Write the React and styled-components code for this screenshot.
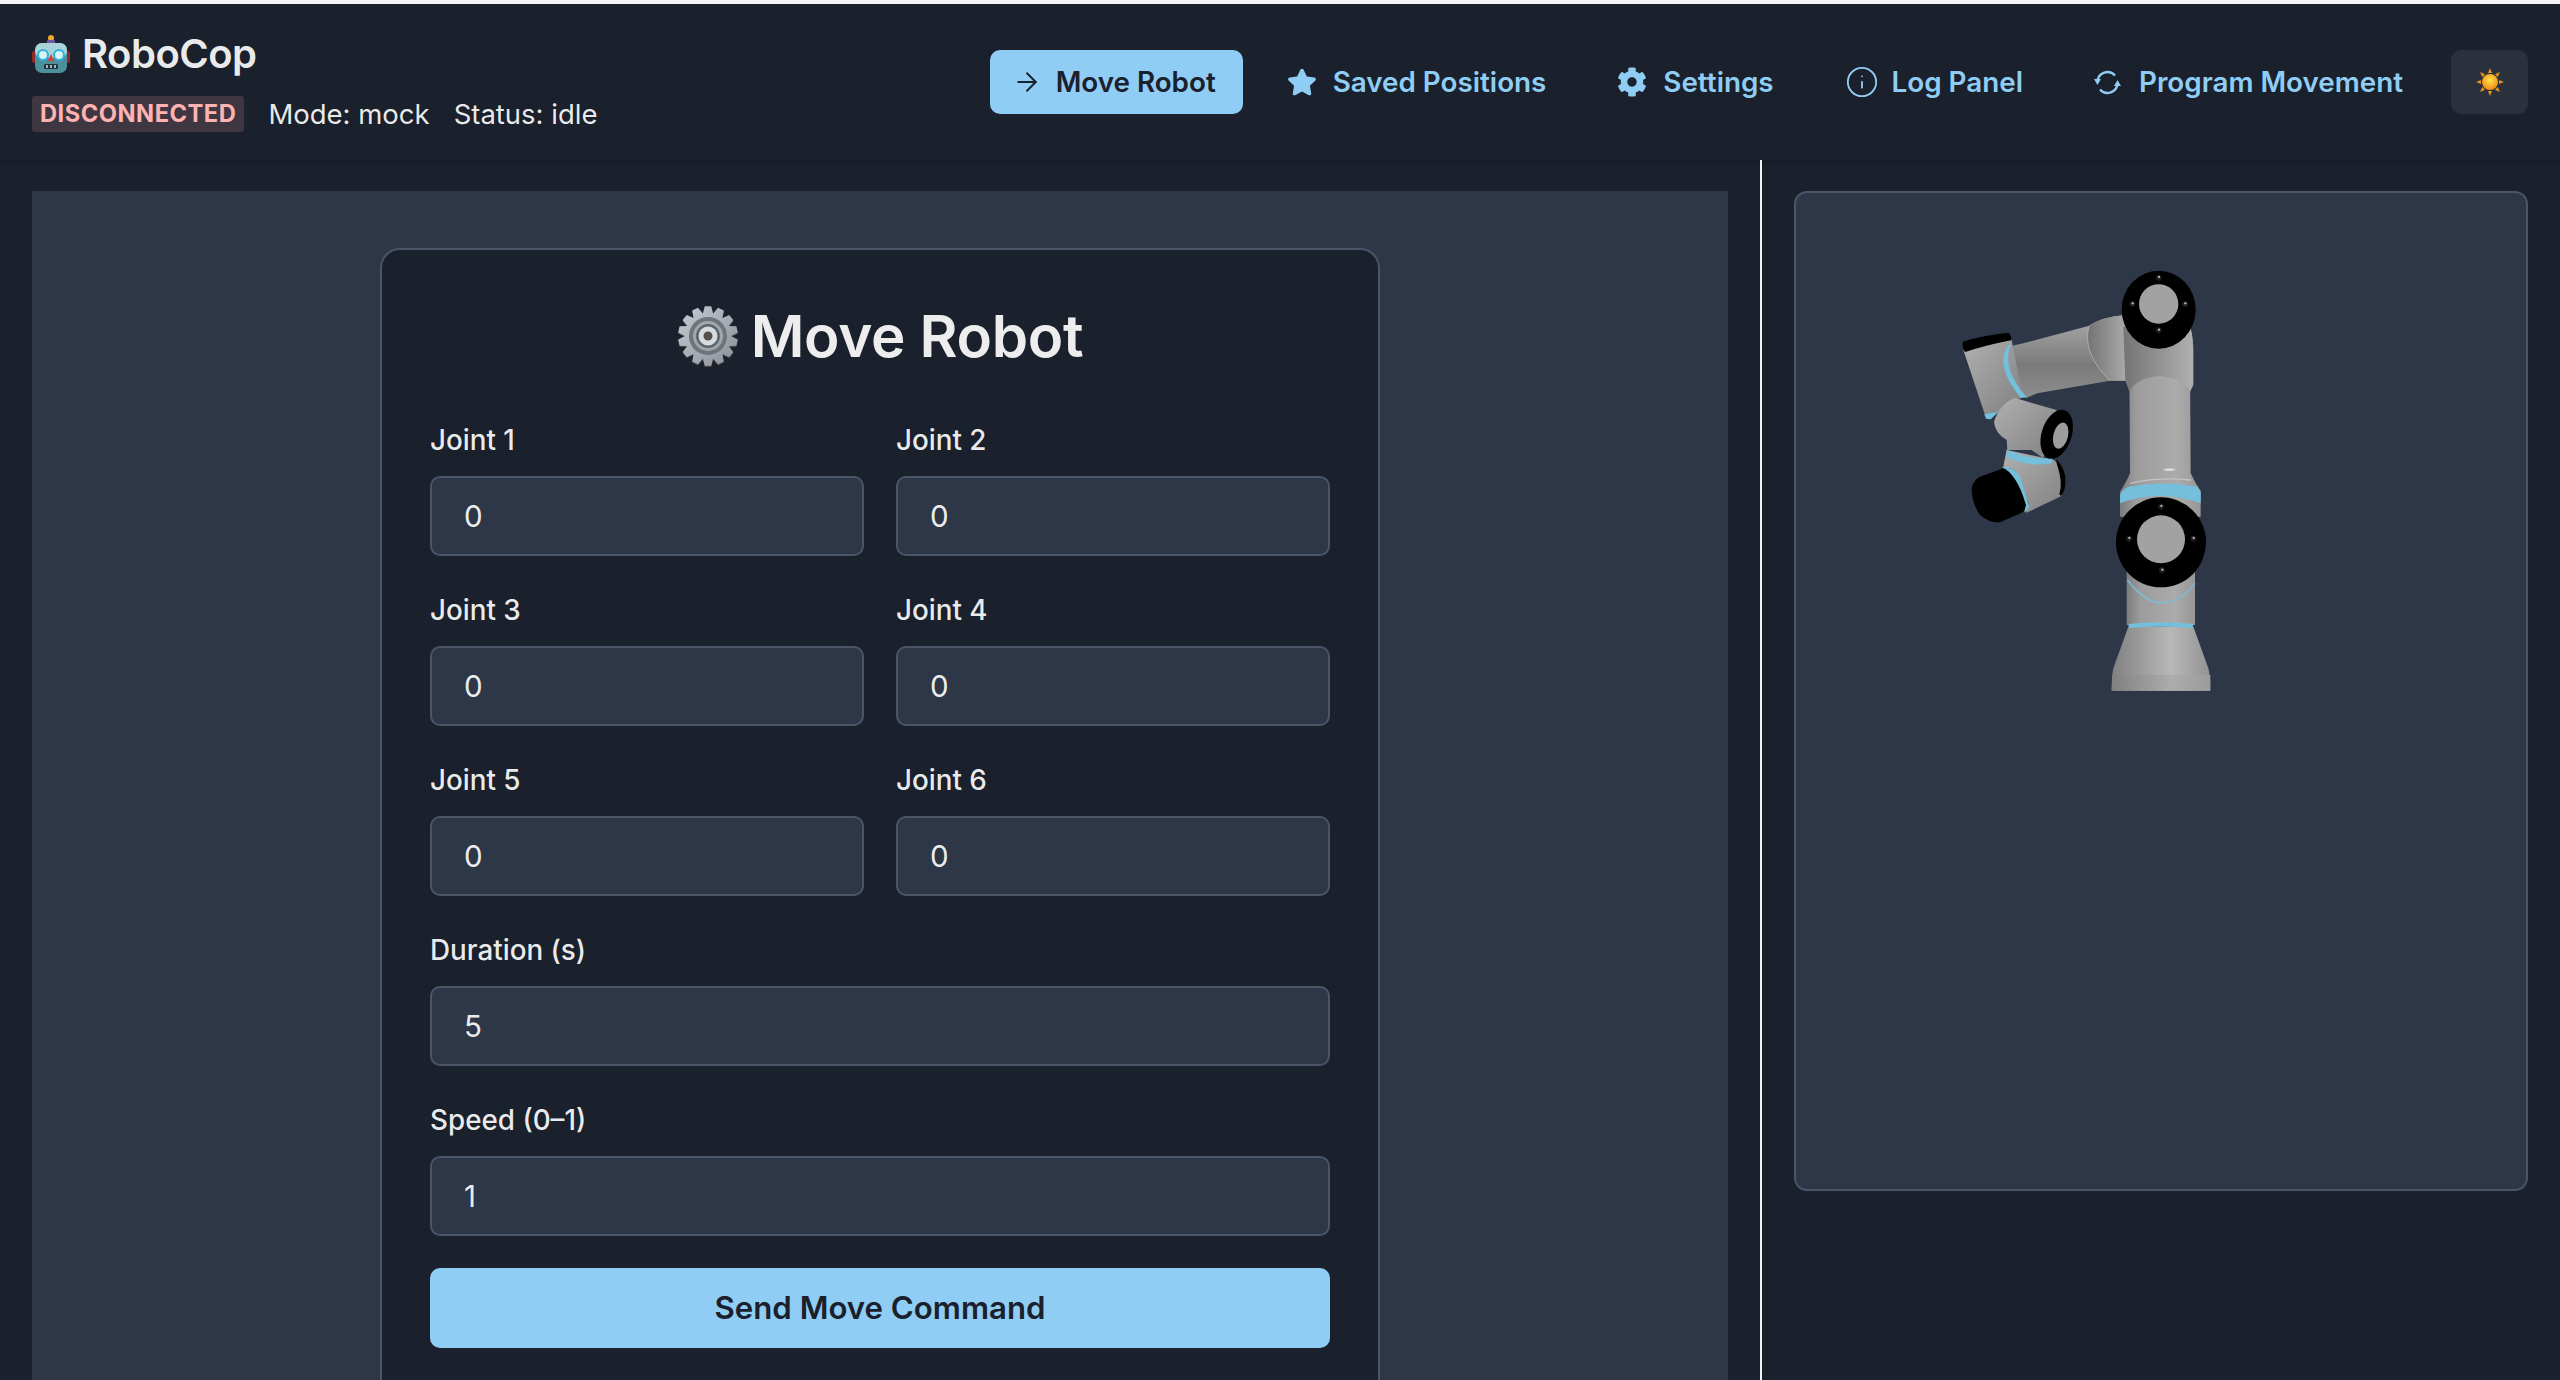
import React from 'react';
import styled, { createGlobalStyle } from 'styled-components';
import { ArrowRight, Info } from 'lucide-react';
import { FaCog, FaStar } from 'react-icons/fa';

const Global = createGlobalStyle`
  html, body {
    margin: 0;
    height: 100%;
    overflow: hidden;
    background: #1a202c;
    font-family: Inter, "Liberation Sans", sans-serif;
    color: rgba(255, 255, 255, 0.92);
  }
  * { box-sizing: border-box; }
`;

const Page = styled.div`
  height: 1380px;
  border-top: 4px solid #f4f4f6;
  display: flex;
  flex-direction: column;
  overflow: hidden;
`;
const Header = styled.header`
  height: 156px;
  flex: none;
  display: flex;
  align-items: flex-start;
  justify-content: space-between;
  padding: 26px 32px 0;
  box-shadow: 0 2px 6px rgba(0, 0, 0, 0.12);
`;
const Brand = styled.div`
  display: flex;
  flex-direction: column;
  gap: 18px;
`;
const Logo = styled.div`
  display: flex;
  align-items: center;
  gap: 12px;
  font-size: 40px;
  line-height: 48px;
  font-weight: 600;
  letter-spacing: -0.5px;
`;
const StatusRow = styled.div`
  display: flex;
  align-items: center;
  gap: 24px;
  font-size: 27.5px;
  line-height: 36px;
`;
const Badge = styled.span`
  background: rgba(254, 178, 178, 0.16);
  color: #feb2b2;
  font-size: 23.7px;
  font-weight: 700;
  line-height: 36px;
  padding: 0 8px;
  border-radius: 3px;
  letter-spacing: 0.5px;
`;
const Nav = styled.nav`
  display: flex;
  align-items: center;
  gap: 17px;
  margin-top: 20px;
`;
const NavButton = styled.button`
  height: 64px;
  display: flex;
  align-items: center;
  gap: ${p => p.$gap || 16}px;
  padding: 0 27px 0 ${p => (p.$active ? 22 : 27)}px;
  border: 0;
  border-radius: 10px;
  font: 600 27.8px Inter, sans-serif;
  background: ${p => (p.$active ? '#90cdf4' : 'transparent')};
  color: ${p => (p.$active ? '#1a202c' : '#90cdf4')};
`;
const ThemeButton = styled.button`
  width: 77px;
  height: 64px;
  display: flex;
  align-items: center;
  justify-content: center;
  margin-left: 4px;
  border: 0;
  border-radius: 10px;
  background: rgba(255, 255, 255, 0.08);
`;
const Main = styled.main`
  flex: 1;
  min-height: 0;
  display: grid;
  grid-template-columns: 1760px 2px 1fr;
`;
const LeftCol = styled.section`
  padding: 31px 32px 0;
`;
const Divider = styled.div`
  background: #f2f2f2;
`;
const RightCol = styled.section`
  padding: 31px 32px 0 32px;
`;
const Stage = styled.div`
  height: 1000px;
  padding-top: 57px;
  padding-left: 104px;
  background: #2d3748;
  border: 2px solid #4a5568;
  border-radius: 13px;
`;
const FormPanel = styled.div`
  height: 1300px;
  background: #2d3748;
  padding-top: 57px;
  display: flex;
  justify-content: center;
`;
const Card = styled.div`
  width: 1000px;
  height: 1300px;
  padding: 48px;
  background: #1a202c;
  border: 2px solid #4a5568;
  border-radius: 20px;
`;
const Title = styled.h2`
  margin: 6px 0 52px;
  display: flex;
  align-items: center;
  justify-content: center;
  gap: 12px;
  font-size: 58.3px;
  line-height: 64px;
  font-weight: 600;
  letter-spacing: -0.3px;
`;
const Fields = styled.div`
  display: grid;
  grid-template-columns: 1fr 1fr;
  column-gap: 32px;
  row-gap: 34px;
`;
const Field = styled.label`
  display: block;
  grid-column: ${p => (p.$wide ? '1 / -1' : 'auto')};
`;
const FieldLabel = styled.span`
  display: block;
  height: 40px;
  margin-bottom: 16px;
  font-size: 27.8px;
  line-height: 40px;
  font-weight: 500;
`;
const Input = styled.input`
  display: block;
  width: 100%;
  height: 80px;
  padding: 0 32px;
  border: 2px solid #4a5568;
  border-radius: 10px;
  background: #2d3748;
  color: rgba(255, 255, 255, 0.92);
  font: 400 29.5px Inter, sans-serif;
  outline: none;
`;
const Submit = styled.button`
  display: block;
  width: 100%;
  height: 80px;
  margin-top: 32px;
  border: 0;
  border-radius: 10px;
  background: #90cdf4;
  color: #1a202c;
  font: 600 31.2px Inter, sans-serif;
`;

function RobotEmoji() {
  return (
    <svg width="38" height="38" viewBox="0 0 38 38">
      <rect x="0" y="16" width="5" height="12" rx="2" fill="#8c2a2a" />
      <rect x="33" y="16" width="5" height="12" rx="2" fill="#8c2a2a" />
      <circle cx="19" cy="3" r="3" fill="#f0a92c" />
      <rect x="15" y="5" width="8" height="4" rx="1" fill="#6b5aa8" />
      <rect x="3" y="8" width="32" height="30" rx="7" fill="#4d8f9b" />
      <rect x="3" y="8" width="32" height="15" rx="7" fill="#a9d3d8" />
      <circle cx="11" cy="20" r="5" fill="#d9f3f7" stroke="#27b5dd" strokeWidth="2" />
      <circle cx="27" cy="20" r="5" fill="#d9f3f7" stroke="#27b5dd" strokeWidth="2" />
      <path d="M19 19l3.5 7h-7z" fill="#d8423c" />
      <rect x="12" y="29" width="14" height="5" rx="1.5" fill="#17353d" />
      <path d="M15 30v3M19 30v3M23 30v3" stroke="#d6dfe0" strokeWidth="1.5" />
    </svg>
  );
}

function SunEmoji() {
  const rays = [0, 45, 90, 135, 180, 225, 270, 315];
  return (
    <svg width="28" height="28" viewBox="0 0 28 28">
      <defs>
        <radialGradient id="sunFill" cx="50%" cy="40%" r="60%">
          <stop offset="0" stopColor="#ffe34d" />
          <stop offset="1" stopColor="#f08a14" />
        </radialGradient>
      </defs>
      {rays.map(r => (
        <path key={r} d="M14 0l2 5h-4z" fill="#e8921a" transform={`rotate(${r} 14 14)`} />
      ))}
      <circle cx="14" cy="14" r="8" fill="url(#sunFill)" />
    </svg>
  );
}

// 14 toothed gear, built from a polar outline
function gearOutline(cx, cy, outer, inner, teeth) {
  const pts = [];
  const step = (Math.PI * 2) / teeth;
  for (let i = 0; i < teeth; i++) {
    const a = i * step - Math.PI / 2;
    [[-0.5, inner], [-0.24, outer], [0.24, outer], [0.5, inner]].forEach(([o, r]) => {
      const t = a + o * step;
      pts.push(`${(cx + Math.cos(t) * r).toFixed(2)},${(cy + Math.sin(t) * r).toFixed(2)}`);
    });
  }
  return pts.join(' ');
}

function GearEmoji() {
  return (
    <svg width="62" height="62" viewBox="0 0 62 62">
      <defs>
        <linearGradient id="gearBody" x1="0" y1="0" x2="1" y2="1">
          <stop offset="0" stopColor="#c4ccd4" />
          <stop offset="1" stopColor="#8a8f96" />
        </linearGradient>
      </defs>
      <polygon points={gearOutline(31, 31, 30, 23, 14)} fill="#5b534e" transform="translate(0 1)" />
      <polygon points={gearOutline(31, 31, 30, 23, 14)} fill="url(#gearBody)" />
      <circle cx="31" cy="31" r="19" fill="#6f747b" />
      <circle cx="31" cy="31" r="15" fill="#a2a7ad" />
      <circle cx="31" cy="31" r="12" fill="#5f646b" />
      <circle cx="31" cy="31" r="9.5" fill="#d5dbe1" />
      <circle cx="31" cy="31" r="4.5" fill="#55504f" />
    </svg>
  );
}

function RepeatGlyph() {
  return (
    <svg width="27" height="27" viewBox="0 0 27 27" fill="none">
      <path d="M3.5 12.5A10 10 0 0 1 21 6.5" stroke="#90cdf4" strokeWidth="2.4" />
      <path d="M23.5 14.5A10 10 0 0 1 6 20.5" stroke="#90cdf4" strokeWidth="2.4" />
      <path d="M0 10h7l-3.5 6z" fill="#90cdf4" />
      <path d="M27 17h-7l3.5-6z" fill="#90cdf4" />
    </svg>
  );
}

function Screw({ x, y }) {
  return (
    <g>
      <circle cx={x} cy={y} r="9" fill="#1c1c1c" />
      <circle cx={x + 1} cy={y - 2} r="3.5" fill="#b0b0b0" />
    </g>
  );
}

function RobotArm() {
  return (
    <svg width="340" height="460" viewBox="0 0 1020 1380">
      <defs>
        <linearGradient id="col" x1="0" x2="1" y1="0" y2="0">
          <stop offset="0" stopColor="#7c7c7c" />
          <stop offset="0.2" stopColor="#9c9c9c" />
          <stop offset="0.7" stopColor="#ababab" />
          <stop offset="1" stopColor="#979797" />
        </linearGradient>
        <linearGradient id="baseFill" x1="0" x2="1" y1="0" y2="0">
          <stop offset="0" stopColor="#808080" />
          <stop offset="0.6" stopColor="#b8b8b8" />
          <stop offset="1" stopColor="#929292" />
        </linearGradient>
        <linearGradient id="baseFoot" x1="0" x2="1" y1="0" y2="0">
          <stop offset="0" stopColor="#808080" />
          <stop offset="0.6" stopColor="#acacac" />
          <stop offset="1" stopColor="#9c9c9c" />
        </linearGradient>
        <linearGradient id="fore" x1="0" x2="0" y1="0" y2="1">
          <stop offset="0" stopColor="#ababab" />
          <stop offset="0.6" stopColor="#7a7a7a" />
          <stop offset="1" stopColor="#8d8d8d" />
        </linearGradient>
        <linearGradient id="elbow" x1="0" x2="1" y1="0" y2="0">
          <stop offset="0" stopColor="#747474" />
          <stop offset="0.55" stopColor="#949494" />
          <stop offset="1" stopColor="#b0b0b0" />
        </linearGradient>
        <linearGradient id="wrist" x1="0" x2="1" y1="0" y2="1">
          <stop offset="0" stopColor="#b0b0b0" />
          <stop offset="1" stopColor="#808080" />
        </linearGradient>
      </defs>

      {/* base */}
      <path d="M685 1130L880 1130L925 1255Q931 1275 931 1322L635 1322Q635 1275 640 1255Z" fill="url(#baseFill)" />
      <path d="M637 1275L931 1275L931 1322L635 1322Z" fill="url(#baseFoot)" />
      <path d="M680 960L885 960L885 1125L680 1125Z" fill="url(#col)" />
      <path d="M682 990Q740 1062 785 1058Q840 1058 885 1000" fill="none" stroke="#78bfdc" strokeWidth="4" />
      <path d="M685 1122Q780 1112 880 1122L878 1134Q780 1126 687 1134Z" fill="#74c0dc" />

      {/* upper column */}
      <path d="M688 330L870 330L872 670Q885 700 902 722L902 800L660 800L660 725Q680 695 690 670Z" fill="url(#col)" />
      <path d="M660 735Q670 710 700 708Q790 692 890 710L902 725L902 760Q780 715 660 760Z" fill="#74c0dc" />
      <ellipse cx="808" cy="659" rx="18" ry="4" fill="#dcdcdc" />
      <path d="M690 700Q780 680 872 690" fill="none" stroke="#c4c4c4" strokeWidth="4" />

      {/* lower joint */}
      <circle cx="783" cy="877" r="135" fill="#000" />
      <circle cx="783" cy="868" r="72" fill="#a2a2a2" />
      <Screw x={783} y={770} />
      <Screw x={687} y={866} />
      <Screw x={880} y={866} />
      <Screw x={786} y={961} />

      {/* forearm */}
      <path d="M670 196Q610 200 565 228L370 280L325 290L330 400L378 444L412 430L630 392L690 392L690 200Z" fill="url(#fore)" />
      <path d="M567 228Q545 310 630 392L690 392L690 200L670 196Q610 200 567 228Z" fill="url(#elbow)" />
      <path d="M567 228Q545 310 630 392" fill="none" stroke="#c0c0c0" strokeWidth="2" />

      {/* elbow housing under the top joint */}
      <path d="M670 230L870 230Q882 260 880 330L880 405L870 425Q850 385 780 378Q710 382 688 425L676 392Z" fill="url(#elbow)" />

      {/* top joint */}
      <ellipse cx="776" cy="179" rx="111" ry="117" fill="#000" />
      <circle cx="776" cy="162" r="59" fill="#a2a2a2" />
      <Screw x={776} y={83} />
      <Screw x={697} y={162} />
      <Screw x={855} y={162} />
      <Screw x={776} y={241} />

      {/* wrist 1 */}
      <path d="M190 300L335 270L368 440L300 485L255 495Z" fill="url(#wrist)" />
      <path d="M188 275Q250 255 325 248Q335 255 334 270Q260 285 195 306Q187 295 188 275Z" fill="#000" />
      <path d="M334 283Q300 350 380 442L362 444Q285 350 322 288Z" fill="#74c0dc" />
      <path d="M253 493L296 485L272 508L258 506Z" fill="#74c0dc" />

      {/* wrist 3 and tool flange */}
      <path d="M320 600L462 630L482 650L497 695L485 738L380 788L320 720L310 650Z" fill="url(#wrist)" />
      <path d="M470 628Q498 660 497 695Q495 725 483 738L478 732Q490 700 470 640Z" fill="#000" />
      <path d="M320 600Q390 630 458 625L455 640Q380 652 320 620Z" fill="#74c0dc" />
      <path d="M215 715Q220 690 240 680L310 655Q335 650 350 668L385 760Q388 775 365 788L300 817Q270 820 240 795Q215 760 215 715Z" fill="#000" />
      <path d="M305 651Q345 650 360 680L388 770L372 788L378 765Q350 670 305 651Z" fill="#74c0dc" />

      {/* wrist 2 */}
      <path d="M345 444L470 480L430 625L395 600L322 600L320 570Q285 550 282 515Q300 460 345 444Z" fill="url(#wrist)" />
      <ellipse cx="470" cy="553" rx="45" ry="76" transform="rotate(18 470 553)" fill="#000" />
      <ellipse cx="482" cy="557" rx="22" ry="40" transform="rotate(14 482 557)" fill="#9c9c9c" />
    </svg>
  );
}

const jointRows = ['Joint 1', 'Joint 2', 'Joint 3', 'Joint 4', 'Joint 5', 'Joint 6'];

function App() {
  return (
    <Page>
      <Global />
      <Header>
        <Brand>
          <Logo><RobotEmoji />RoboCop</Logo>
          <StatusRow>
            <Badge>DISCONNECTED</Badge>
            <span>Mode: mock</span>
            <span>Status: idle</span>
          </StatusRow>
        </Brand>
        <Nav>
          <NavButton $active $gap={14}><ArrowRight size={30} strokeWidth={1.5} />Move Robot</NavButton>
          <NavButton><FaStar size={30} />Saved Positions</NavButton>
          <NavButton><FaCog size={30} />Settings</NavButton>
          <NavButton $gap={13}><Info size={34} strokeWidth={1.3} />Log Panel</NavButton>
          <NavButton $gap={18}><RepeatGlyph />Program Movement</NavButton>
          <ThemeButton><SunEmoji /></ThemeButton>
        </Nav>
      </Header>
      <Main>
        <LeftCol>
          <FormPanel>
            <Card>
              <Title><GearEmoji />Move Robot</Title>
              <Fields>
                {jointRows.map(name => (
                  <Field key={name}>
                    <FieldLabel>{name}</FieldLabel>
                    <Input defaultValue="0" />
                  </Field>
                ))}
                <Field $wide>
                  <FieldLabel>Duration (s)</FieldLabel>
                  <Input defaultValue="5" />
                </Field>
                <Field $wide>
                  <FieldLabel>Speed (0–1)</FieldLabel>
                  <Input defaultValue="1" />
                </Field>
              </Fields>
              <Submit>Send Move Command</Submit>
            </Card>
          </FormPanel>
        </LeftCol>
        <Divider />
        <RightCol>
          <Stage><RobotArm /></Stage>
        </RightCol>
      </Main>
    </Page>
  );
}

export default App;
